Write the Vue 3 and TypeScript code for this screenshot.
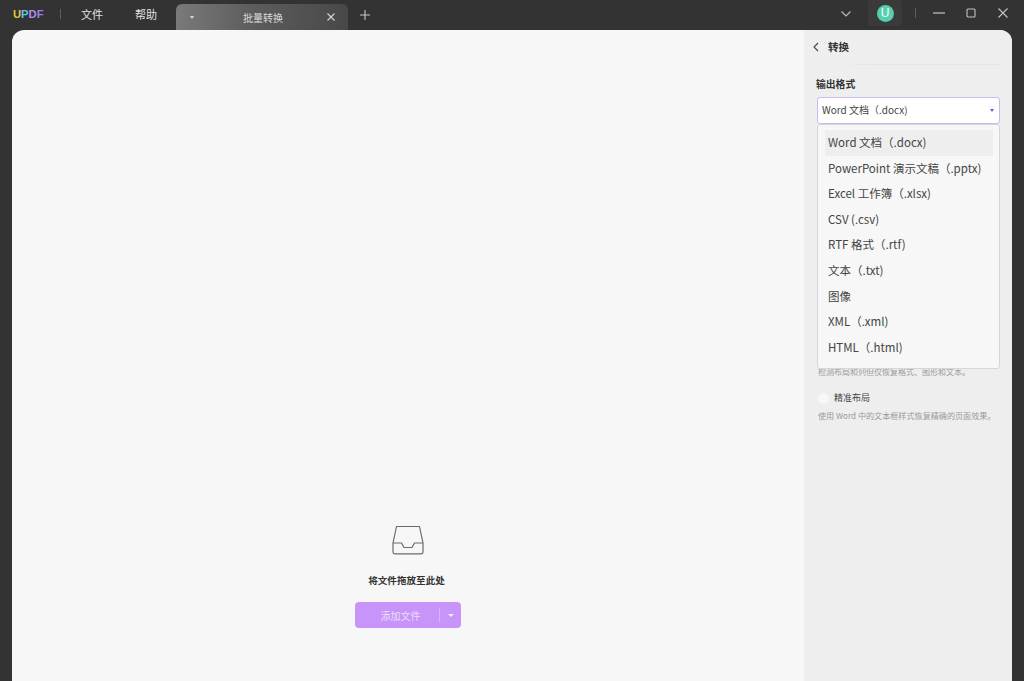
<script setup lang="ts">
const formats: string[] = [
  'Word 文档（.docx)',
  'PowerPoint 演示文稿（.pptx)',
  'Excel 工作簿（.xlsx)',
  'CSV (.csv)',
  'RTF 格式（.rtf)',
  '文本（.txt)',
  '图像',
  'XML（.xml)',
  'HTML（.html)',
]
</script>

<template>
  <div class="app">
    <header class="titlebar">
      <div class="logo"><span class="u">U</span><span class="p">P</span><span class="d">D</span><span class="f">F</span></div>
      <i class="sep sep-left"></i>
      <span class="menu menu-file">文件</span>
      <span class="menu menu-help">帮助</span>
      <div class="tab">
        <span class="tab-caret"></span>
        <span class="tab-title">批量转换</span>
        <svg class="tab-close" width="10" height="10" viewBox="0 0 10 10"><path d="M1.500 1.500l7 7M8.500 1.500l-7 7" stroke="#d6d6d6" stroke-width="1.100" fill="none" /></svg>
      </div>
      <svg class="tab-add" width="12" height="12" viewBox="0 0 12 12"><path d="M6 1v10M1 6h10" stroke="#c8c8c8" stroke-width="1.100" fill="none" /></svg>
      <div class="spacer"></div>
      <svg class="chev" width="12" height="8" viewBox="0 0 12 8"><path d="M1.500 1.500L6 6l4.500-4.500" stroke="#bdbdbd" stroke-width="1.100" fill="none" /></svg>
      <div class="avatar-box"><div class="avatar">U</div></div>
      <i class="sep sep-right"></i>
      <svg class="win win-min" width="14" height="12" viewBox="0 0 14 12"><path d="M1 6h12" stroke="#c4c4c4" stroke-width="1.200" fill="none" /></svg>
      <svg class="win win-max" width="10" height="10" viewBox="0 0 10 10"><rect x="1" y="1" width="8" height="8" rx="1" stroke="#c4c4c4" stroke-width="1.100" fill="none" /></svg>
      <svg class="win win-close" width="12" height="12" viewBox="0 0 12 12"><path d="M1.500 1.500l9 9M10.500 1.500l-9 9" stroke="#c4c4c4" stroke-width="1.100" fill="none" /></svg>
    </header>

    <div class="body">
      <main class="card">
        <section class="drop-area">
          <svg class="tray" width="32" height="30" viewBox="0 0 32 30">
            <path d="M4.500 1.500h23l3.500 16.500v9a1.800 1.800 0 0 1-1.800 1.800H2.800A1.800 1.800 0 0 1 1 27V18z" fill="none" stroke="#6b6b6b" stroke-width="1.200" stroke-linejoin="round" />
            <path d="M1 18h8.500l2.500 4.500h8l2.500-4.500H31" fill="none" stroke="#6b6b6b" stroke-width="1.200" stroke-linejoin="round" />
          </svg>
          <p class="drop-text">将文件拖放至此处</p>
          <div class="add-btn">
            <span class="add-label">添加文件</span>
            <i class="add-sep"></i>
            <span class="add-caret"></span>
          </div>
        </section>

        <aside class="panel">
          <div class="panel-head">
            <svg class="back" width="6" height="10" viewBox="0 0 6 10"><path d="M5 1L1 5l4 4" stroke="#444" stroke-width="1.100" fill="none" /></svg>
            <span>转换</span>
          </div>
          <div class="label">输出格式</div>
          <div class="select">
            <span class="select-text">Word 文档（.docx)</span>
            <span class="select-caret"></span>
          </div>
          <div class="desc-one">检测布局和列但仅恢复格式、图形和文本。</div>
          <div class="radio-row"><i class="radio"></i><span>精准布局</span></div>
          <div class="desc-two">使用 Word 中的文本框样式恢复精确的页面效果。</div>

          <ul class="dropdown">
            <li v-for="(f, i) in formats" :key="f" :class="{ active: i === 0 }">{{ f }}</li>
          </ul>
        </aside>
      </main>
    </div>
  </div>
</template>

<style>
html, body { margin: 0; background: #333333; }
</style>

<style scoped>
.app {
  width: 1024px;
  height: 681px;
  background: #333333;
  display: flex;
  flex-direction: column;
  overflow: hidden;
  font-family: "Noto Sans CJK SC", "Noto Sans", sans-serif;
}
.titlebar {
  height: 30px;
  display: flex;
  align-items: center;
  flex: none;
  color: #e4e4e4;
}
.logo {
  margin-left: 13px;
  width: 31px;
  font-family: "Liberation Sans", sans-serif;
  font-weight: 700;
  font-size: 11.200px;
  line-height: 30px;
  margin-top: -2px;
}
.u { color: #e8c33c; }
.p { color: #5cc8e8; }
.d { color: #b78ae8; }
.f { color: #a07df0; }
.sep { width: 1px; height: 10px; background: #5e5e5e; display: block; }
.sep-left { margin-left: 16px; margin-top: -2px; }
.menu { font-size: 11px; color: #e2e2e2; margin-top: -3px; }
.menu-file { margin-left: 20px; }
.menu-help { margin-left: 32px; }
.tab {
  margin-left: 19px;
  margin-top: 4px;
  width: 172px;
  height: 26px;
  border-radius: 6px 6px 0 0;
  background: linear-gradient(90deg, #7a7a7a 0%, #5c5c5c 45%, #484848 100%);
  display: flex;
  align-items: center;
  box-sizing: border-box;
  padding: 0 12px 0 14px;
  flex: none;
}
.tab-caret {
  width: 0; height: 0;
  border-left: 2.500px solid transparent;
  border-right: 2.500px solid transparent;
  border-top: 3px solid #dcdcdc;
}
.tab-title {
  flex: 1;
  text-align: center;
  font-size: 10px;
  color: #dcdcdc;
  margin-left: 6px;
}
.tab-add { margin-left: 11px; }
.spacer { flex: 1; }
.chev { margin-right: 16px; margin-top: -2px; }
.avatar-box {
  width: 34px;
  height: 26px;
  margin-top: -4px;
  background: #3a3a3a;
  display: flex;
  align-items: center;
  justify-content: center;
  border-radius: 3px;
  margin-right: 13px;
}
.avatar {
  width: 17px;
  height: 17px;
  border-radius: 50%;
  background: #56cfae;
  color: #fff;
  font-family: "Liberation Sans", sans-serif;
  font-size: 12px;
  line-height: 17px;
  text-align: center;
}
.sep-right { margin-right: 16px; margin-top: -4px; }
.win { margin-top: -4px; flex: none; }
.win-min { margin-right: 20px; }
.win-max { margin-right: 21px; }
.win-close { margin-right: 15px; }

.body {
  flex: 1;
  padding: 0 12px;
  min-height: 0;
}
.card {
  height: 100%;
  display: flex;
  border-radius: 12px 12px 0 0;
  overflow: hidden;
  background: #f7f7f7;
}
.drop-area {
  width: 792px;
  flex: none;
  box-sizing: border-box;
  padding-top: 495px;
  display: flex;
  flex-direction: column;
  align-items: center;
}
.tray { display: block; }
.drop-text {
  margin: 17px 3px 0 0;
  font-size: 9.600px;
  line-height: 16px;
  font-weight: 700;
  color: #333;
}
.add-btn {
  margin-top: 14px;
  width: 106px;
  height: 26px;
  border-radius: 4px;
  background: #c794f9;
  display: flex;
  align-items: center;
  box-sizing: border-box;
}
.add-label {
  width: 84px;
  text-align: center;
  padding-left: 7px;
  box-sizing: border-box;
  font-size: 10px;
  color: #ecdcfd;
}
.add-sep { width: 1px; height: 14px; background: #d7b5fa; display: block; }
.add-caret {
  margin-left: 8px;
  width: 0; height: 0;
  border-left: 3px solid transparent;
  border-right: 3px solid transparent;
  border-top: 3px solid #f6eefe;
}
.panel {
  position: relative;
  flex: 1;
  background: #eeeeee;
  box-sizing: border-box;
  padding: 0 12px 0 13px;
}
.panel-head {
  height: 35px;
  box-sizing: border-box;
  display: flex;
  align-items: center;
  gap: 9px;
  font-size: 10.500px;
  font-weight: 700;
  color: #333;
  margin-left: -3px;
  padding-bottom: 1px;
  border-bottom: 1px solid transparent;
  border-image: linear-gradient(90deg, transparent 15%, #e5e5e5 30%) 1;
}
.back { margin-left: -1px; }
.label {
  margin-top: 12px;
  margin-left: -1px;
  font-size: 9.800px;
  line-height: 14px;
  font-weight: 700;
  color: #333;
}
.select {
  margin-top: 6px;
  height: 27px;
  width: 183px;
  box-sizing: border-box;
  border: 1px solid #c9baf0;
  border-radius: 3px;
  background: #ffffff;
  display: flex;
  align-items: center;
  justify-content: space-between;
  padding: 0 5px 0 4px;
  font-size: 10px;
  color: #444;
}
.select-text { margin-top: -2px; }
.select-caret {
  width: 0; height: 0;
  border-left: 2.500px solid transparent;
  border-right: 2.500px solid transparent;
  border-top: 3.500px solid #7f50d8;
}
.desc-one {
  margin-top: 241px;
  font-size: 8px;
  line-height: 14px;
  color: #9a9a9a;
  margin-left: 1px;
  white-space: nowrap;
}
.radio-row {
  margin-top: 12px;
  display: flex;
  align-items: center;
  gap: 5px;
  font-size: 9px;
  line-height: 14px;
  color: #444;
  margin-left: 1px;
}
.radio {
  width: 11px;
  height: 11px;
  border-radius: 50%;
  background: #f7f7f7;
  display: block;
}
.desc-two {
  margin-top: 4px;
  font-size: 8.100px;
  line-height: 14px;
  color: #9a9a9a;
  margin-left: 1px;
  white-space: nowrap;
}
.dropdown {
  position: absolute;
  left: 13px;
  top: 94px;
  width: 183px;
  height: 245px;
  box-sizing: border-box;
  margin: 0;
  padding: 5px 6px 0 7px;
  list-style: none;
  background: #f7f7f7;
  border: 1px solid #d6d6d6;
  border-radius: 3px;
}
.dropdown li {
  height: 25.600px;
  line-height: 25.600px;
  font-size: 11.500px;
  padding-left: 3px;
  color: #444;
  white-space: nowrap;
}
.dropdown li.active {
  background: #eeeeee;
}
</style>
